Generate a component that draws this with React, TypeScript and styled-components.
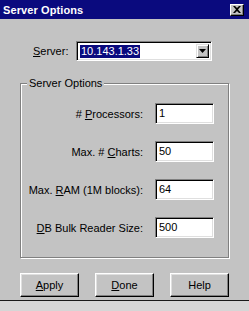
import React from 'react'
import styled, { createGlobalStyle } from 'styled-components'

const GlobalStyle = createGlobalStyle`
  html, body {
    margin: 0;
    padding: 0;
    background: #d6d6d6;
  }
  body {
    font-family: "Liberation Sans", Arial, sans-serif;
    font-size: 11px;
    color: #000;
  }
`

const fields = [
  { key: 'P', before: '# ', rest: 'rocessors:', value: '1' },
  { key: 'C', before: 'Max. # ', rest: 'harts:', value: '50' },
  { key: 'R', before: 'Max. ', rest: 'AM (1M blocks):', value: '64' },
  { key: 'D', before: '', rest: 'B Bulk Reader Size:', value: '500' }
]

export default function App(): React.JSX.Element {
  return (
    <>
      <GlobalStyle />
      <Window>
        <TitleBar>
          <Title>Server Options</Title>
          <CloseButton>
            <svg width="8" height="7" viewBox="0 0 8 7">
              <path d="M0 0h2l2 2 2-2h2L5 3.5 8 7H6L4 5 2 7H0l3-3.5z" fill="#000" />
            </svg>
          </CloseButton>
        </TitleBar>

        <Body>
          <ServerRow>
            <ServerLabel>
              <u>S</u>erver:
            </ServerLabel>
            <Combo>
              <ComboText>
                <Selected>10.143.1.33</Selected>
              </ComboText>
              <DropButton>
                <svg width="7" height="4" viewBox="0 0 7 4">
                  <path d="M0 0h7L3.5 4z" fill="#000" />
                </svg>
              </DropButton>
            </Combo>
          </ServerRow>

          <Group>
            <Legend>Server Options</Legend>
            <FieldGrid>
              {fields.map((f) => (
                <React.Fragment key={f.key}>
                  <FieldLabel>
                    {f.before}
                    <u>{f.key}</u>
                    {f.rest}
                  </FieldLabel>
                  <TextBox>{f.value}</TextBox>
                </React.Fragment>
              ))}
            </FieldGrid>
          </Group>

          <ButtonRow>
            <PushButton>
              <u>A</u>pply
            </PushButton>
            <PushButton>
              <u>D</u>one
            </PushButton>
            <PushButton>Help</PushButton>
          </ButtonRow>
        </Body>
      </Window>
    </>
  )
}

const Window = styled.div`
  width: 249px;
  height: 300px;
  background: #c3c3c3;
  border-bottom: 1px solid #1a1a1a;
  display: flex;
  flex-direction: column;
`

const TitleBar = styled.div`
  height: 19px;
  background: #0a0a7e;
  display: flex;
  align-items: center;
  justify-content: space-between;
  padding: 0 5px 0 3px;
`

const Title = styled.span`
  color: #fff;
  font-weight: bold;
  font-size: 11px;
  letter-spacing: 0.1px;
`

const CloseButton = styled.div`
  width: 14px;
  height: 12px;
  box-sizing: border-box;
  background: #c3c3c3;
  border: 1px solid;
  border-color: #fff #000 #000 #fff;
  box-shadow: inset -1px -1px 0 #808080;
  display: flex;
  align-items: center;
  justify-content: center;
`

const Body = styled.div`
  display: flex;
  flex-direction: column;
  padding: 22px 20px 0 20px;
`

const ServerRow = styled.div`
  display: flex;
  align-items: center;
  padding-left: 13px;
`

const ServerLabel = styled.span`
  width: 43px;
`

const sunken = `
  box-sizing: border-box;
  background: #fff;
  border: 1px solid;
  border-color: #808080 #fff #fff #808080;
  box-shadow: inset 1px 1px 0 #000, inset -1px -1px 0 #dfdfdf;
`

const Combo = styled.div`
  ${sunken}
  width: 136px;
  height: 20px;
  display: flex;
  align-items: center;
  padding: 2px;
`

const ComboText = styled.div`
  flex: 1;
  padding-left: 1px;
  display: flex;
`

const Selected = styled.span`
  background: #0a0a7e;
  color: #fff;
  line-height: 13px;
  padding: 0 1px;
`

const DropButton = styled.div`
  width: 13px;
  height: 14px;
  box-sizing: border-box;
  background: #c3c3c3;
  border: 1px solid;
  border-color: #dfdfdf #000 #000 #dfdfdf;
  box-shadow: inset 1px 1px 0 #fff, inset -1px -1px 0 #808080;
  display: flex;
  align-items: center;
  justify-content: center;
`

const Group = styled.fieldset`
  margin: 16px 0 0 0;
  padding: 0 14px 19px 0;
  border: 1px solid #808080;
  box-shadow: 1px 1px 0 #fff, inset 1px 1px 0 #fff;
  min-width: 0;
`

const Legend = styled.legend`
  margin-left: 6px;
  padding: 0 2px;
  line-height: 13px;
  background: #c3c3c3;
`

const FieldGrid = styled.div`
  display: grid;
  grid-template-columns: 1fr 59px;
  column-gap: 12px;
  row-gap: 17px;
  align-items: center;
  padding-top: 13px;
`

const FieldLabel = styled.span`
  text-align: right;
`

const TextBox = styled.div`
  ${sunken}
  height: 21px;
  padding: 2px 3px;
  line-height: 15px;
`

const ButtonRow = styled.div`
  display: flex;
  justify-content: space-between;
  margin-top: 15px;
`

const PushButton = styled.div`
  width: 59px;
  height: 24px;
  box-sizing: border-box;
  background: #c3c3c3;
  border: 1px solid;
  border-color: #fff #000 #000 #fff;
  box-shadow: inset -1px -1px 0 #808080, inset 1px 1px 0 #dfdfdf;
  display: flex;
  align-items: center;
  justify-content: center;
`
